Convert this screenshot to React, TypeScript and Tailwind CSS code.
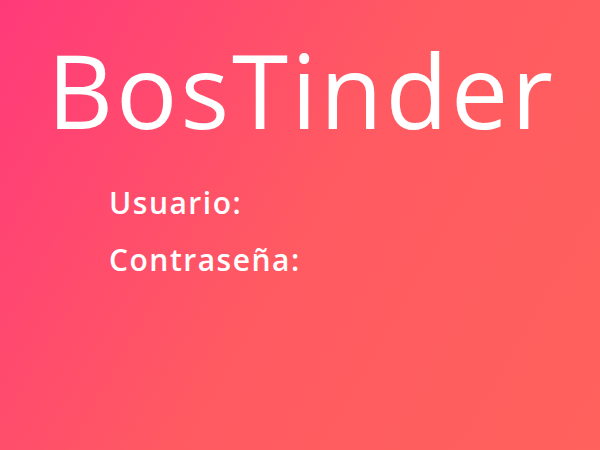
import React from 'react';

const App: React.FC = () => {
  return (
    <div className="w-[600px] h-[450px] overflow-hidden bg-[linear-gradient(120deg,#ff3a7a_0%,#ff5a62_50%,#ff615c_100%)] font-['Open_Sans','Noto_Sans',sans-serif] text-white">
      <h1 className="pt-[30px] pl-[3px] text-center text-[102px] leading-[120px] font-normal tracking-[3px]">
        BosTinder
      </h1>
      <form className="mt-[33px] pl-[109px] flex flex-col gap-[17px]">
        <label className="text-[30px] leading-[40px] font-semibold tracking-[1.5px]">Usuario:</label>
        <label className="text-[30px] leading-[40px] font-semibold tracking-[1.5px]">Contraseña:</label>
      </form>
    </div>
  );
};

export default App;
